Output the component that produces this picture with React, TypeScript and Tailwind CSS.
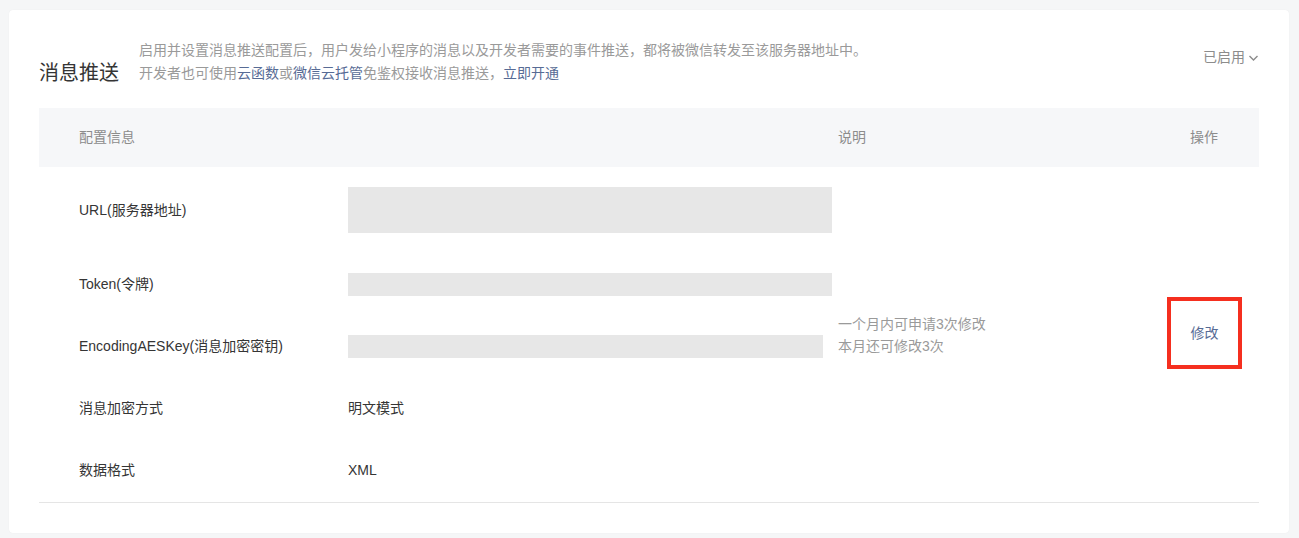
import React from 'react';

const rows = [
  { label: 'URL(服务器地址)', box: 'w-[484px] h-[46px]' },
  { label: 'Token(令牌)', box: 'w-[484px] h-[23px]' },
  { label: 'EncodingAESKey(消息加密密钥)', box: 'w-[475px] h-[23px]' },
];

const ChevronDown = () => (
  <svg width="11" height="10" viewBox="0 0 11 10" className="ml-[3px] mt-[1px]">
    <polyline points="1.5,3 5.5,7 9.5,3" fill="none" stroke="#8c8c8c" strokeWidth="1.4" />
  </svg>
);

export default function App() {
  return (
    <div className="min-h-[538px] bg-[#f5f6f7] pt-[10px] pl-[9px] pr-[10px] font-['Liberation_Sans','Noto_Sans_CJK_SC',sans-serif] text-[14px]">
      <div className="bg-white rounded-[4px] shadow-[0_0_1px_rgba(0,0,0,0.08)] px-[30px] pt-[29px] pb-[30px]">
        {/* Header */}
        <div className="flex items-start">
          <div className="flex items-end">
            <h2 className="text-[20px] leading-[28px] text-[#353535] font-normal mb-[-2px]">消息推送</h2>
            <div className="ml-[20px] text-[14px] leading-[23px] text-[#9a9a9a]">
              <p>启用并设置消息推送配置后，用户发给小程序的消息以及开发者需要的事件推送，都将被微信转发至该服务器地址中。</p>
              <p>
                开发者也可使用<span className="text-[#576b95]">云函数</span>或<span className="text-[#576b95]">微信云托管</span>免鉴权接收消息推送，<span className="text-[#576b95]">立即开通</span>
              </p>
            </div>
          </div>
          <div className="ml-auto mt-[8px] flex items-center text-[14px] text-[#8c8c8c]">
            已启用
            <ChevronDown />
          </div>
        </div>

        {/* Table */}
        <div className="mt-[23px]">
          <div className="grid grid-cols-[309px_490px_1fr_auto] h-[59px] items-center bg-[#f6f7f9] text-[#8c8c8c]">
            <div className="pl-[40px]">配置信息</div>
            <div />
            <div>说明</div>
            <div className="pr-[41px]">操作</div>
          </div>

          <div className="grid grid-cols-[309px_490px_1fr_auto] grid-rows-[86px_62px_62px_62px_63px] border-b border-[#e5e5e5] text-[#353535]">
            {rows.map((r, i) => (
              <React.Fragment key={r.label}>
                <div className={`col-start-1 flex items-center pl-[40px] ${['row-start-1', 'row-start-2', 'row-start-3'][i]}`}>
                  {r.label}
                </div>
                <div className={`col-start-2 flex items-center ${['row-start-1', 'row-start-2', 'row-start-3'][i]}`}>
                  <div className={`bg-[#e7e7e7] ${r.box}`} />
                </div>
              </React.Fragment>
            ))}

            <div className="col-start-3 row-start-1 row-span-3 self-end pb-[20px] text-[14px] leading-[22px] text-[#9a9a9a]">
              <p>一个月内可申请3次修改</p>
              <p>本月还可修改3次</p>
            </div>
            <div className="col-start-4 row-start-1 row-span-3 self-end pb-[8px] pr-[17px]">
              <div className="w-[75px] h-[72px] border-4 border-[#f52f1f] flex items-center justify-center text-[#576b95]">
                修改
              </div>
            </div>

            <div className="col-start-1 row-start-4 flex items-center pl-[40px]">消息加密方式</div>
            <div className="col-start-2 row-start-4 flex items-center">明文模式</div>
            <div className="col-start-1 row-start-5 flex items-center pl-[40px]">数据格式</div>
            <div className="col-start-2 row-start-5 flex items-center">XML</div>
          </div>
        </div>
      </div>
    </div>
  );
}
